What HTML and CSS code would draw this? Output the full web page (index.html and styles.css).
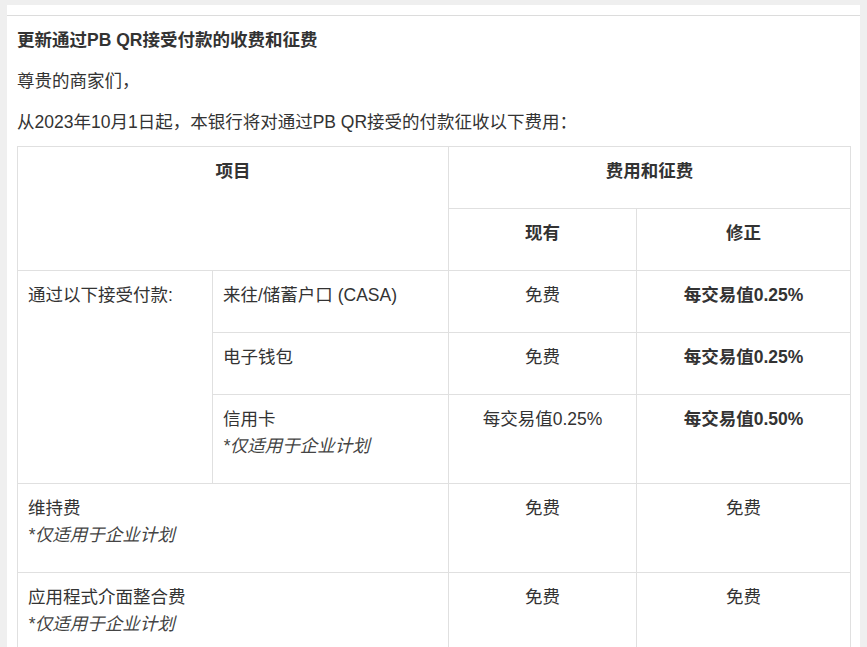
FILE: index.html
```html
<!DOCTYPE html>
<html lang="zh">
<head>
<meta charset="utf-8">
<title>更新通过PB QR接受付款的收费和征费</title>
<link rel="stylesheet" href="styles.css">
</head>
<body>
<div class="page">
  <div class="page-top"></div>
  <div class="content">
    <p class="title">更新通过PB QR接受付款的收费和征费</p>
    <p>尊贵的商家们，</p>
    <p class="lead">从2023年10月1日起，本银行将对通过PB QR接受的付款征收以下费用：</p>
    <table class="fees">
      <colgroup>
        <col class="c1"><col class="c2"><col class="c3"><col class="c4">
      </colgroup>
      <tr>
        <th colspan="2" rowspan="2">项目</th>
        <th colspan="2">费用和征费</th>
      </tr>
      <tr>
        <th>现有</th>
        <th>修正</th>
      </tr>
      <tr>
        <td rowspan="3">通过以下接受付款:</td>
        <td>来往/储蓄户口 (CASA)</td>
        <td class="ctr">免费</td>
        <td class="ctr"><strong>每交易值0.25%</strong></td>
      </tr>
      <tr>
        <td>电子钱包</td>
        <td class="ctr">免费</td>
        <td class="ctr"><strong>每交易值0.25%</strong></td>
      </tr>
      <tr>
        <td>信用卡<br><em>*仅适用于企业计划</em></td>
        <td class="ctr">每交易值0.25%</td>
        <td class="ctr"><strong>每交易值0.50%</strong></td>
      </tr>
      <tr>
        <td colspan="2">维持费<br><em>*仅适用于企业计划</em></td>
        <td class="ctr">免费</td>
        <td class="ctr">免费</td>
      </tr>
      <tr>
        <td colspan="2">应用程式介面整合费<br><em>*仅适用于企业计划</em></td>
        <td class="ctr">免费</td>
        <td class="ctr">免费</td>
      </tr>
    </table>
  </div>
</div>
</body>
</html>
```

FILE: styles.css
```css
html, body {
  margin: 0;
  padding: 0;
  background: #efefef;
}
body {
  font-family: "Liberation Sans", "Noto Sans CJK SC", sans-serif;
  font-size: 17.5px;
  line-height: 27px;
  color: #333;
}
.page {
  margin: 5px 7px 0 7px;
  background: #fff;
  min-height: 700px;
}
.page-top {
  height: 10px;
  border-bottom: 1px solid #dcdcdc;
}
.content {
  padding: 11px 11px 0 10px;
}
.content p {
  margin: 0 0 14px 0;
}
.content p.lead {
  margin-bottom: 10px;
}
.title {
  font-weight: bold;
}
.fees {
  width: 833px;
  table-layout: fixed;
  border-collapse: collapse;
}
.c1 { width: 195px; }
.c2 { width: 236px; }
.c3 { width: 188px; }
.c4 { width: 214px; }
.fees th, .fees td {
  border: 1px solid #e0e0e0;
  padding: 11px 10px 23px 10px;
  vertical-align: top;
  text-align: left;
}
.fees th {
  text-align: center;
  font-weight: bold;
}
.fees td.ctr {
  text-align: center;
}
.fees em {
  color: #444;
}
```
